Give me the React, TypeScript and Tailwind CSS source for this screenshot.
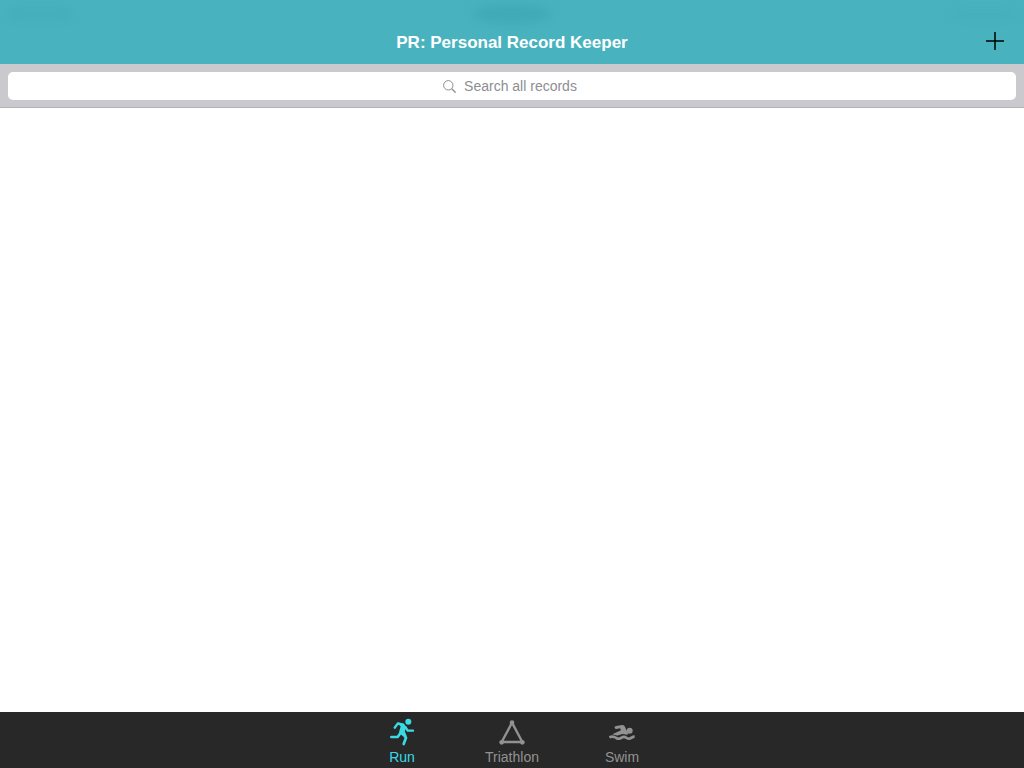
import type { ReactNode } from 'react';

function RunIcon() {
  return (
    <svg viewBox="0 0 78 84" className="h-7 w-[26px]" fill="none" stroke="currentColor" strokeLinejoin="round" strokeLinecap="round" aria-hidden="true">
      <circle cx="58" cy="11" r="9" fill="currentColor" stroke="none" />
      <path d="M28 16 L44 20 L50 28 L45 40 L51 53 L42 52 L32 43 L37 25 Z" fill="currentColor" strokeWidth="4" />
      <path d="M17 29 L27 16 L43 20" strokeWidth="7" />
      <path d="M49 27 L56 38 L72 38" strokeWidth="7" />
      <path d="M34 46 L26 57 L7 57" strokeWidth="8" />
      <path d="M41 47 L51 59 L44 78" strokeWidth="8" />
    </svg>
  );
}

function TriathlonIcon() {
  return (
    <svg viewBox="0 0 78 84" className="h-7 w-[26px]" fill="none" stroke="currentColor" aria-hidden="true">
      <path d="M39 14 L70 72 H8 Z" strokeWidth="7" strokeLinejoin="round" />
      <g fill="currentColor" stroke="none">
        <circle cx="39" cy="14" r="7" />
        <circle cx="8" cy="73" r="7" />
        <circle cx="70" cy="73" r="7" />
      </g>
    </svg>
  );
}

function SwimIcon() {
  return (
    <svg viewBox="0 0 78 84" className="h-7 w-[26px]" fill="currentColor" aria-hidden="true">
      <circle cx="62" cy="38" r="9" />
      <path d="M17 30 Q15 25 21 24 L40 21 Q44 21 47 25 L58 48 Q53 52 47 49 Q40 46 33 50 Q24 55 10 49 L36 37 L33 31 L22 33 Q18 33 17 30 Z" />
      <path d="M1 58 Q12 53 22 60 Q30 65 38 59 Q45 54 53 60 Q60 65 68 59 Q72 56 77 56" fill="none" stroke="currentColor" strokeWidth="8" />
    </svg>
  );
}

function Tab({ label, active = false, children }: { label: string; active?: boolean; children: ReactNode }) {
  return (
    <button
      type="button"
      aria-current={active ? 'page' : undefined}
      className={`flex w-[76px] flex-col items-center pt-1.5 ${active ? 'text-[#39dbe5]' : 'text-[#929292]'}`}
    >
      {children}
      <span className="text-sm leading-[22px]">{label}</span>
    </button>
  );
}

export default function App() {
  return (
    <div className="flex min-h-screen flex-col bg-white font-['Liberation_Sans',Arial,sans-serif]">
      <header className="relative grid h-16 grid-cols-[1fr_auto_1fr] items-end overflow-hidden bg-[#48b3be]">
        <div className="absolute top-1 left-1/2 h-5 w-20 -translate-x-1/2 rounded-[50%] bg-[#309da5]/35 blur-xs" />
        <div className="absolute top-2 left-2 h-3 w-16 rounded-full bg-[#309da5]/15 blur-xs" />
        <div className="absolute top-2 right-2 h-3 w-16 rounded-full bg-[#309da5]/10 blur-xs" />
        <h1 className="relative col-start-2 text-[17px] leading-[42px] font-bold text-white">PR: Personal Record Keeper</h1>
        <button type="button" aria-label="Add record" className="relative mr-2 flex h-[46px] w-[42px] items-center justify-center justify-self-end text-black">
          <svg viewBox="0 0 18 18" className="size-[18px]" stroke="currentColor" strokeWidth="1.5" aria-hidden="true">
            <path d="M9 0 V18 M0 9 H18" />
          </svg>
        </button>
      </header>

      <form role="search" className="border-b border-[#b3b3b7] bg-[#c9c9ce] px-2 pt-2 pb-[7px]" onSubmit={(event) => event.preventDefault()}>
        <label className="flex h-7 items-center justify-center gap-2 rounded-[5px] bg-white pr-1 text-[#8e8e93]">
          <svg viewBox="0 0 13 13" className="size-[13px]" fill="none" stroke="currentColor" strokeWidth="1" aria-hidden="true">
            <circle cx="5.3" cy="5.3" r="4.7" />
            <path d="M8.7 8.7 L12.6 12.6" strokeWidth="1.3" />
          </svg>
          <input
            type="text"
            aria-label="Search all records"
            placeholder="Search all records"
            className="field-sizing-content text-sm leading-5 text-black outline-none placeholder:text-[#8e8e93]"
          />
        </label>
      </form>

      <main className="flex-1" />

      <nav aria-label="Sports" className="flex h-14 justify-center gap-[34px] bg-[#282828]">
        <Tab label="Run" active>
          <RunIcon />
        </Tab>
        <Tab label="Triathlon">
          <TriathlonIcon />
        </Tab>
        <Tab label="Swim">
          <SwimIcon />
        </Tab>
      </nav>
    </div>
  );
}
